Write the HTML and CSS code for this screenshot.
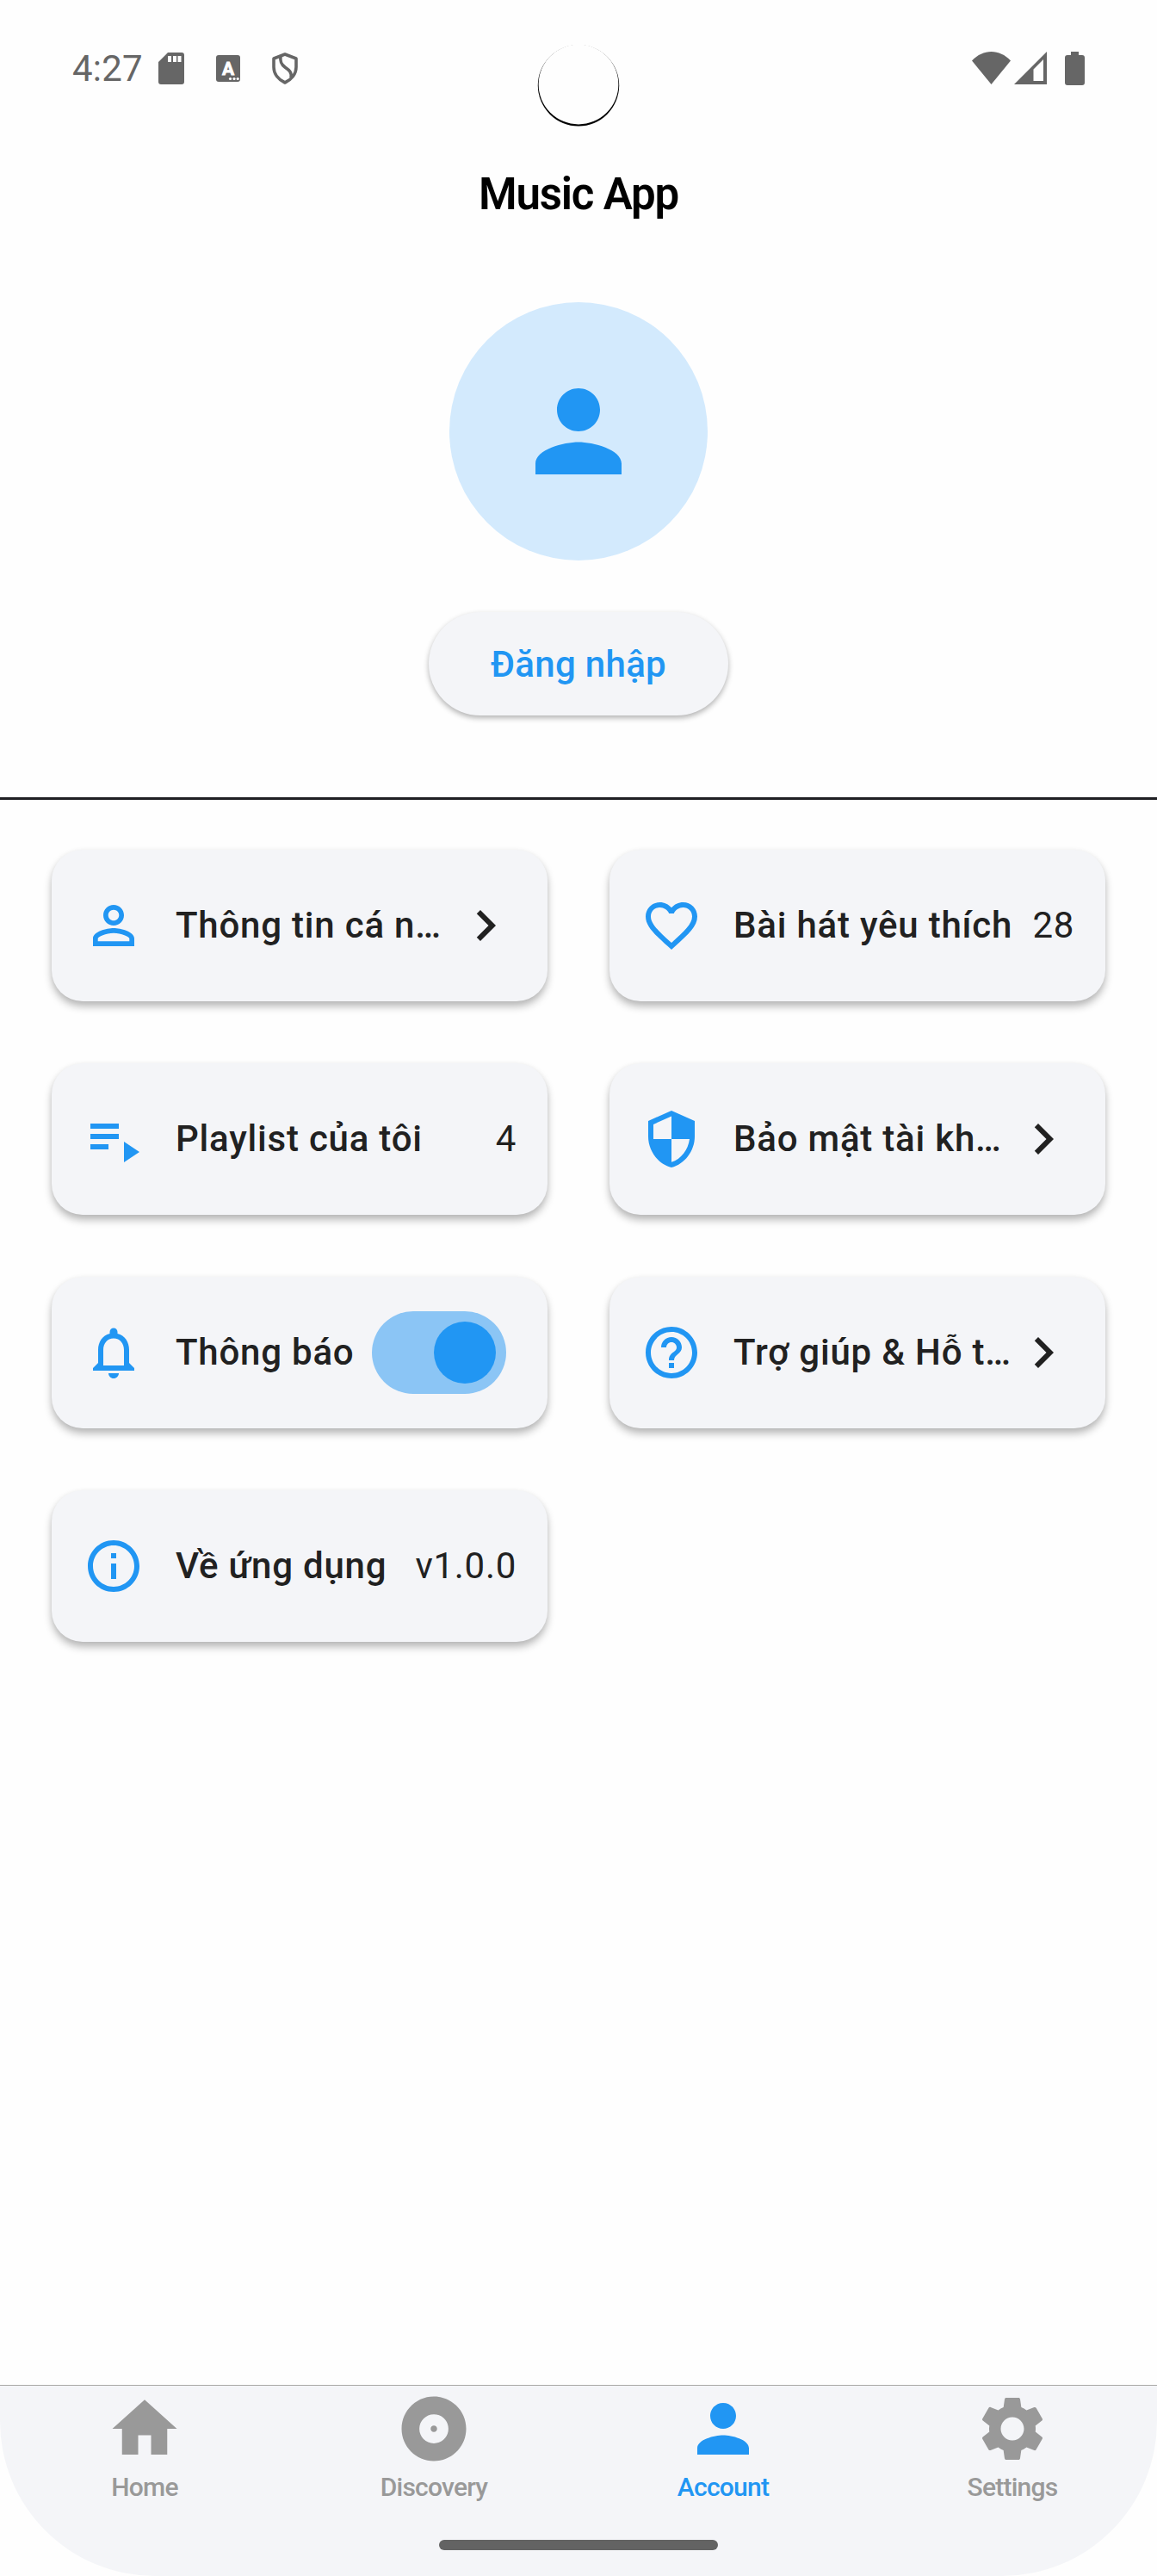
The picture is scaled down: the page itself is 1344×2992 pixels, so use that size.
FILE: index.html
```html
<!DOCTYPE html>
<html lang="vi">
<head>
<meta charset="utf-8">
<title>Music App</title>
<link rel="stylesheet" href="styles.css">
</head>
<body>
<svg class="sprite" aria-hidden="true">
  <symbol id="i-person" viewBox="0 0 24 24"><path d="M12 12c2.210 0 4-1.790 4-4s-1.790-4-4-4-4 1.790-4 4 1.790 4 4 4zm0 2c-2.670 0-8 1.340-8 4v2h16v-2c0-2.660-5.330-4-8-4z"/></symbol>
  <symbol id="i-chevron" viewBox="0 0 24 24"><path d="M10 6L8.590 7.410 13.170 12l-4.580 4.590L10 18l6-6z"/></symbol>
</svg>
<div class="screen">
  <header class="status">
    <span class="clock">4:27</span>
    <svg class="st-sd" viewBox="0 0 30 37"><path fill-rule="evenodd" d="M11 0H27a3 3 0 0 1 3 3V34a3 3 0 0 1-3 3H3a3 3 0 0 1-3-3V11zM11 4v7h4V4zM17 4v7h4V4zM22.500 4v7h4V4z"/></svg>
    <svg class="st-a" viewBox="0 0 28 31"><rect width="28" height="31" rx="3"/><text class="st-letter" x="14" y="23" text-anchor="middle">A</text><g fill="#fff"><circle cx="16.500" cy="27.500" r="1.600"/><circle cx="21" cy="27.500" r="1.600"/><circle cx="25.200" cy="27.500" r="1.600"/></g></svg>
    <svg class="st-shield" viewBox="0 0 30 37"><path class="st-line" d="M15 2L28 7V17C28 25 22.500 31.500 15 35C7.500 31.500 2 25 2 17V7zM10 4.500C9 11 11 14 15 17C20 20.500 23 23 22 29"/></svg>
    <span class="st-gap"></span>
    <svg class="st-wifi" viewBox="0 0 45 38"><path d="M0 10.500C13-3.500 32-3.500 45 10.500L22.500 38z"/></svg>
    <svg class="st-signal" viewBox="0 0 38 38"><path fill-rule="evenodd" d="M38 0V38H0zM34 9L22.500 20.500V34H34z"/></svg>
    <svg class="st-battery" viewBox="0 0 23 39"><path d="M7 0h9v4h4a3 3 0 0 1 3 3v29a3 3 0 0 1-3 3H3a3 3 0 0 1-3-3V7a3 3 0 0 1 3-3h4z"/></svg>
    <svg class="camera" viewBox="0 0 96 96"><circle cx="48" cy="48.300" r="47.200" fill="#000"/><circle cx="48" cy="47" r="46.400" fill="#fefefe"/></svg>
  </header>
  <h1 class="title">Music App</h1>
  <section class="profile">
    <div class="avatar"><svg><use href="#i-person"/></svg></div>
    <button class="login">Đăng nhập</button>
  </section>
  <main class="grid">
    <div class="card"><svg class="ic" viewBox="0 0 24 24"><path d="M12 5.900c1.160 0 2.100.940 2.100 2.100s-.940 2.100-2.100 2.100S9.900 9.160 9.900 8s.940-2.100 2.100-2.100m0 9c2.970 0 6.100 1.460 6.100 2.100v1.100H5.900V17c0-.640 3.130-2.100 6.100-2.100M12 4C9.790 4 8 5.790 8 8s1.790 4 4 4 4-1.790 4-4-1.790-4-4-4zm0 9c-2.670 0-8 1.340-8 4v3h16v-3c0-2.660-5.330-4-8-4z"/></svg><span class="label">Thông tin cá n…</span><svg class="chev"><use href="#i-chevron"/></svg></div>
    <div class="card"><svg class="ic" viewBox="0 0 24 24"><path d="M16.500 3c-1.740 0-3.410.810-4.500 2.090C10.910 3.810 9.240 3 7.500 3 4.420 3 2 5.420 2 8.500c0 3.780 3.400 6.860 8.550 11.540L12 21.350l1.450-1.320C18.600 15.360 22 12.280 22 8.500 22 5.420 19.580 3 16.500 3zm-4.400 15.550l-.1.100-.1-.1C7.140 14.240 4 11.390 4 8.500 4 6.500 5.500 5 7.500 5c1.540 0 3.040.990 3.570 2.360h1.870C13.460 5.990 14.960 5 16.500 5c2 0 3.500 1.500 3.500 3.500 0 2.890-3.140 5.740-7.900 10.050z"/></svg><span class="label">Bài hát yêu thích</span><span class="value">28</span></div>
    <div class="card"><svg class="ic" viewBox="0 0 24 24"><path d="M3 10h11v2H3zm0-4h11v2H3zm0 8h7v2H3zm13-1v8l6-4z"/></svg><span class="label">Playlist của tôi</span><span class="value">4</span></div>
    <div class="card"><svg class="ic" viewBox="0 0 24 24"><path d="M12 1L3 5v6c0 5.550 3.840 10.740 9 12 5.160-1.260 9-6.450 9-12V5l-9-4zm0 10.990h7c-.530 4.120-3.280 7.790-7 8.940V12H5V6.300l7-3.110v8.800z"/></svg><span class="label">Bảo mật tài kh…</span><svg class="chev"><use href="#i-chevron"/></svg></div>
    <div class="card"><svg class="ic" viewBox="0 0 24 24"><path d="M12 22c1.100 0 2-.9 2-2h-4c0 1.100.9 2 2 2zm6-6v-5c0-3.070-1.630-5.640-4.500-6.320V4c0-.830-.670-1.500-1.500-1.500s-1.500.670-1.500 1.500v.680C7.640 5.360 6 7.920 6 11v5l-2 2v1h16v-1l-2-2zm-2 1H8v-6c0-2.480 1.510-4.500 4-4.500s4 2.020 4 4.500v6z"/></svg><span class="label">Thông báo</span><span class="switch"><span class="thumb"></span></span></div>
    <div class="card"><svg class="ic" viewBox="0 0 24 24"><path d="M11 18h2v-2h-2v2zm1-16C6.480 2 2 6.480 2 12s4.480 10 10 10 10-4.480 10-10S17.520 2 12 2zm0 18c-4.410 0-8-3.590-8-8s3.590-8 8-8 8 3.590 8 8-3.590 8-8 8zm0-14c-2.210 0-4 1.790-4 4h2c0-1.100.9-2 2-2s2 .9 2 2c0 2-3 1.750-3 5h2c0-2.250 3-2.500 3-5 0-2.210-1.790-4-4-4z"/></svg><span class="label">Trợ giúp &amp; Hỗ t…</span><svg class="chev"><use href="#i-chevron"/></svg></div>
    <div class="card"><svg class="ic" viewBox="0 0 24 24"><path d="M11 7h2v2h-2zm0 4h2v6h-2zm1-9C6.480 2 2 6.480 2 12s4.480 10 10 10 10-4.480 10-10S17.520 2 12 2zm0 18c-4.410 0-8-3.590-8-8s3.590-8 8-8 8 3.590 8 8-3.590 8-8 8z"/></svg><span class="label">Về ứng dụng</span><span class="value">v1.0.0</span></div>
  </main>
  <nav class="tabs">
    <div class="tab"><svg viewBox="0 0 24 24"><path d="M10 20v-6h4v6h5v-8h3L12 3 2 12h3v8z"/></svg><span>Home</span></div>
    <div class="tab"><svg viewBox="0 0 24 24"><path d="M12 2C6.480 2 2 6.480 2 12s4.480 10 10 10 10-4.480 10-10S17.520 2 12 2zm0 14.500c-2.490 0-4.500-2.010-4.500-4.500S9.510 7.500 12 7.500s4.500 2.010 4.500 4.500-2.010 4.500-4.500 4.500zm0-5.500c-.550 0-1 .450-1 1s.450 1 1 1 1-.450 1-1-.450-1-1-1z"/></svg><span>Discovery</span></div>
    <div class="tab active"><svg><use href="#i-person"/></svg><span>Account</span></div>
    <div class="tab"><svg viewBox="0 0 24 24"><path d="M19.140 12.940c.040-.3.060-.610.060-.940 0-.320-.020-.640-.070-.940l2.030-1.580c.180-.140.230-.410.120-.610l-1.920-3.320c-.120-.220-.370-.290-.590-.220l-2.390.960c-.5-.380-1.030-.7-1.620-.940l-.360-2.540c-.040-.240-.240-.410-.480-.410h-3.840c-.240 0-.430.170-.470.410l-.360 2.540c-.590.240-1.130.570-1.620.940l-2.390-.960c-.220-.080-.470 0-.590.220L2.740 8.870c-.120.210-.080.470.120.610l2.030 1.580c-.050.3-.090.630-.090.940s.020.640.070.940l-2.030 1.580c-.180.140-.230.410-.120.610l1.920 3.320c.120.220.370.290.590.220l2.390-.960c.5.380 1.030.7 1.620.940l.360 2.540c.050.240.240.410.480.410h3.840c.240 0 .440-.170.470-.410l.360-2.540c.590-.240 1.130-.560 1.620-.940l2.390.960c.220.080.470 0 .590-.220l1.920-3.320c.120-.220.070-.470-.120-.610l-2.010-1.580zM12 15.600c-1.980 0-3.600-1.620-3.600-3.600s1.620-3.600 3.600-3.600 3.600 1.620 3.600 3.600-1.620 3.600-3.600 3.600z"/></svg><span>Settings</span></div>
    <div class="home-bar"></div>
  </nav>
</div>
</body>
</html>
```

FILE: styles.css
```css
* { box-sizing: border-box; }
body { margin: 0; background: #fefefe; font-family: Roboto, "Noto Sans", sans-serif; color: #212121; }
.sprite { position: absolute; width: 0; height: 0; }
.screen { width: 1344px; height: 2992px; display: flex; flex-direction: column; overflow: hidden; background: #fefefe; }
.status { position: relative; height: 159px; flex: none; display: flex; align-items: center; padding: 0 84px; color: #666; fill: #666; }
.clock { font-size: 42px; line-height: 48px; width: 100px; letter-spacing: .2px; }
.st-sd { width: 30px; height: 37px; }
.st-a { width: 28px; height: 31px; margin-left: 37px; }
.st-letter { font: 700 21px Roboto, sans-serif; fill: #fff; stroke: #fff; stroke-width: .8px; }
.st-shield { width: 30px; height: 37px; margin-left: 37px; }
.st-line { fill: none; stroke: #666; stroke-width: 3.6px; stroke-linejoin: round; }
.st-gap { flex: 1; }
.st-wifi { width: 45px; height: 38px; margin-right: 4px; margin-bottom: 2px; }
.st-signal { width: 38px; height: 38px; margin-right: 21px; margin-bottom: 2px; }
.st-battery { width: 23px; height: 39px; margin-bottom: 1px; }
.camera { position: absolute; left: 624px; top: 51px; width: 96px; height: 96px; }
.title { margin: 0; flex: none; height: 132px; text-align: center; font-size: 51px; line-height: 134px; font-weight: 600; letter-spacing: -1.2px; color: #000; }
.profile { flex: none; height: 638px; padding-top: 60px; border-bottom: 3px solid #1f1f23; display: flex; flex-direction: column; align-items: center; gap: 60px; }
.avatar { width: 300px; height: 300px; border-radius: 50%; background: #d3eafd; display: flex; align-items: center; justify-content: center; fill: #2196f3; }
.avatar svg { width: 150px; height: 150px; }
.login { width: 348px; height: 120px; border: 0; border-radius: 60px; background: #f4f5f8; color: #2196f3; font: 500 42px Roboto, "Noto Sans", sans-serif; letter-spacing: .3px; padding: 0; box-shadow: 0 3px 6px rgba(0,0,0,.3); }
.grid { flex: none; padding: 58px 60px 0; display: grid; grid-template-columns: 576px 576px; grid-auto-rows: 176px; gap: 72px; }
.card { display: flex; align-items: center; padding: 0 36px; border-radius: 36px; background: #f4f5f8; box-shadow: 0 6px 10px rgba(0,0,0,.27), 0 1px 6px rgba(0,0,0,.04); }
.ic { width: 72px; height: 72px; margin-right: 36px; flex: none; fill: #2196f3; }
.label { flex: 1; min-width: 0; white-space: nowrap; font-size: 42px; line-height: 60px; font-weight: 500; letter-spacing: .78px; }
.value { font-size: 42px; line-height: 60px; letter-spacing: .7px; }
.chev { width: 72px; height: 72px; flex: none; fill: #212121; }
.switch { width: 156px; height: 96px; margin-right: 12px; padding: 12px; border-radius: 48px; background: #8bc5f5; display: flex; justify-content: flex-end; }
.thumb { width: 72px; height: 72px; border-radius: 50%; background: #2196f3; }
.tabs { flex: none; margin-top: auto; height: 222px; display: grid; grid-template-columns: repeat(4, 1fr); grid-template-rows: 179px 12px; border-radius: 0 0 180px 180px; background: linear-gradient(#a9a9a6 1px, #f4f5f8 1px); padding-top: 1px; }
.tab { display: flex; flex-direction: column; align-items: center; padding-top: 5px; color: #999; fill: #999; font-size: 30px; line-height: 36px; font-weight: 500; letter-spacing: -.76px; }
.tab svg { width: 90px; height: 90px; margin-bottom: 5px; }
.tab.active { color: #2196f3; fill: #2196f3; }
.home-bar { grid-column: 1 / -1; justify-self: center; width: 324px; height: 12px; border-radius: 6px; background: #636363; }
```
